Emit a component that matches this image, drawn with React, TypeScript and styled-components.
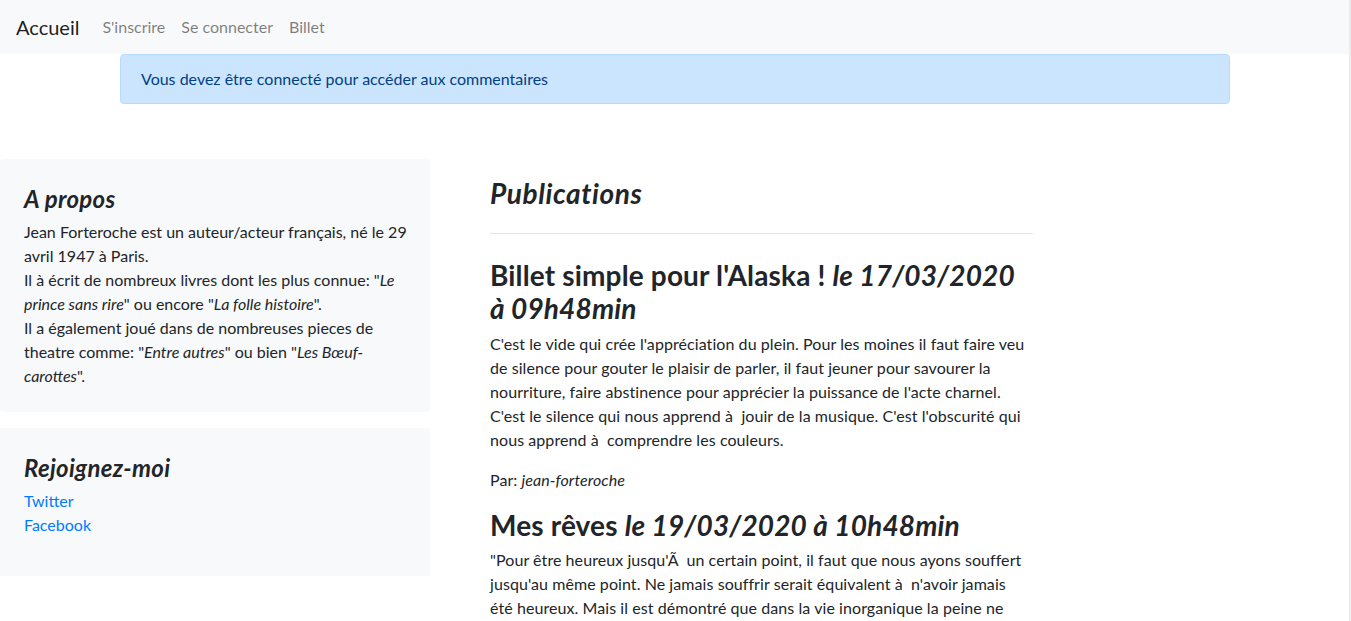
import React from 'react';
import styled, { createGlobalStyle } from 'styled-components';

const GlobalStyle = createGlobalStyle`
    * {
        box-sizing: border-box;
    }
    body {
        margin: 0;
        font-family: Lato, "Liberation Sans", sans-serif;
        font-size: 16px;
        line-height: 1.5;
        color: #212529;
        background: #fff;
    }
`;

const posts = [
    {
        title: "Billet simple pour l'Alaska !",
        date: 'le 17/03/2020 à 09h48min',
        body:
            "C'est le vide qui crée l'appréciation du plein. Pour les moines il faut faire veu de silence pour gouter le plaisir de parler, il faut jeuner pour savourer la nourriture, faire abstinence pour apprécier la puissance de l'acte charnel. C'est le silence qui nous apprend à\u00a0 jouir de la musique. C'est l'obscurité qui nous apprend à\u00a0 comprendre les couleurs.",
        author: 'jean-forteroche',
    },
    {
        title: 'Mes rêves',
        date: 'le 19/03/2020 à 10h48min',
        body:
            "\"Pour être heureux jusqu'Ã\u00a0 un certain point, il faut que nous ayons souffert jusqu'au même point. Ne jamais souffrir serait équivalent à\u00a0 n'avoir jamais été heureux. Mais il est démontré que dans la vie inorganique la peine ne saurait exister sans la plaisir.\"",
        author: 'jean-forteroche',
    },
];

const App = () => {
    return (
        <Page>
            <GlobalStyle />
            <Navbar>
                <Brand href="#">Accueil</Brand>
                <NavLinks>
                    <NavLink href="#">S'inscrire</NavLink>
                    <NavLink href="#">Se connecter</NavLink>
                    <NavLink href="#">Billet</NavLink>
                </NavLinks>
            </Navbar>
            <Container>
                <Alert>Vous devez être connecté pour accéder aux commentaires</Alert>
            </Container>
            <Row>
                <Sidebar>
                    <Card rounded>
                        <CardTitle>A propos</CardTitle>
                        <CardText>
                            Jean Forteroche est un auteur/acteur français, né le 29 avril 1947 à Paris.
                            <br />
                            Il à écrit de nombreux livres dont les plus connue: "<em>Le prince sans rire</em>" ou encore "
                            <em>La folle histoire</em>".
                            <br />
                            Il a également joué dans de nombreuses pieces de theatre comme: "<em>Entre autres</em>" ou bien "
                            <em>Les Bœuf-carottes</em>".
                        </CardText>
                    </Card>
                    <Card>
                        <CardTitle>Rejoignez-moi</CardTitle>
                        <LinkList>
                            <Link href="#">Twitter</Link>
                            <Link href="#">Facebook</Link>
                        </LinkList>
                    </Card>
                </Sidebar>
                <Main>
                    <SectionTitle>Publications</SectionTitle>
                    <Divider />
                    <Posts>
                        {posts.map(({ title, date, body, author }) => (
                            <Post key={title}>
                                <PostTitle>
                                    {title} <em>{date}</em>
                                </PostTitle>
                                <PostBody>{body}</PostBody>
                                <PostBody>
                                    Par: <em>{author}</em>
                                </PostBody>
                            </Post>
                        ))}
                    </Posts>
                </Main>
            </Row>
        </Page>
    );
};

const Page = styled.div`
    width: 1351px;
    height: 621px;
    overflow: hidden;
    border-right: 2px solid #ececec;
`;
const Navbar = styled.nav`
    display: flex;
    align-items: center;
    height: 54px;
    padding: 0 16px 1px;
    background: #f8f9fa;
`;
const Brand = styled.a`
    font-size: 20px;
    color: rgba(0, 0, 0, 0.9);
    text-decoration: none;
    margin-right: 15px;
`;
const NavLinks = styled.div`
    display: flex;
`;
const NavLink = styled.a`
    padding: 8px;
    color: rgba(0, 0, 0, 0.5);
    text-decoration: none;
`;
const Container = styled.div`
    width: 1110px;
    margin-left: 120px;
`;
const Alert = styled.div`
    padding: 12px 20px;
    color: #004085;
    background: #cce5ff;
    border: 1px solid #b8daff;
    border-radius: 4px;
`;
const Row = styled.div`
    display: flex;
    align-items: flex-start;
    gap: 60px;
    margin-top: 55px;
`;
const Sidebar = styled.aside`
    width: 430px;
    display: flex;
    flex-direction: column;
    gap: 16px;
`;
const Card = styled.div<{ rounded?: boolean }>`
    padding: 26px 16px 24px 24px;
    background: #f8f9fa;
    border-radius: ${({ rounded }) => (rounded ? '4px' : '0')};
`;
const CardTitle = styled.h4`
    margin: 0 0 6px;
    font-size: 24px;
    font-weight: 700;
    font-style: italic;
    line-height: 1.2;
    letter-spacing: 0.3px;
`;
const CardText = styled.p`
    margin: 0;
`;
const LinkList = styled.div`
    display: flex;
    flex-direction: column;
    align-items: flex-start;
    padding-bottom: 15px;
`;
const Link = styled.a`
    color: #007bff;
    text-decoration: none;
`;
const Main = styled.main`
    width: 543px;
    padding-top: 18px;
`;
const SectionTitle = styled.h3`
    margin: 0;
    font-size: 28px;
    font-weight: 700;
    font-style: italic;
    line-height: 1.2;
    letter-spacing: 0.6px;
`;
const Divider = styled.hr`
    margin: 22px 0 16px;
    border: 0;
    border-top: 1px solid rgba(0, 0, 0, 0.1);
`;
const Posts = styled.div`
    padding-top: 8px;
    letter-spacing: 0.07px;
`;
const Post = styled.article``;
const PostTitle = styled.h3`
    margin: 0 0 6px;
    padding-top: 1px;
    font-size: 28px;
    font-weight: 700;
    line-height: 1.2;
    letter-spacing: 0.15px;
`;
const PostBody = styled.p`
    margin: 0 0 16px;
    padding-right: 6px;
`;

export default App;
